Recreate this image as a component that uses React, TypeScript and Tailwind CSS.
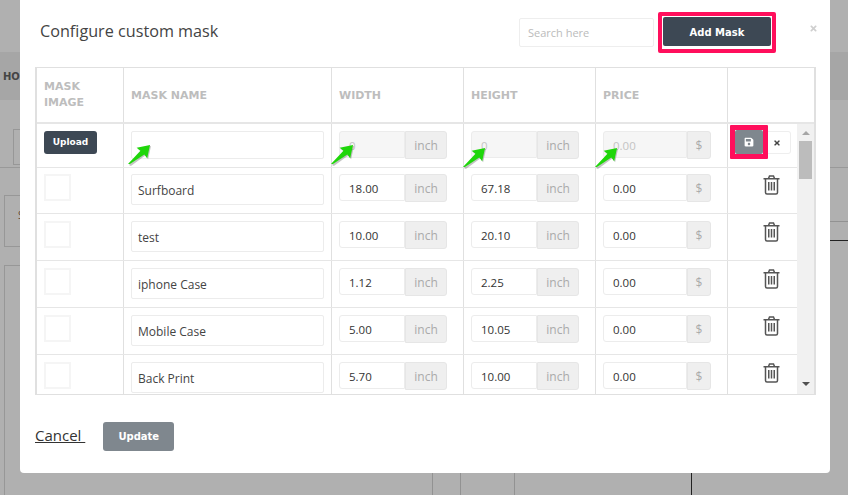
import { FaSave, FaTimes } from "react-icons/fa";

const headFont = { fontFamily: '"DejaVu Sans", sans-serif' };

const rows = [
  { name: "Surfboard", width: "18.00", height: "67.18", price: "0.00", h: "h-[46px]", top: "pt-[6px]" },
  { name: "test", width: "10.00", height: "20.10", price: "0.00", h: "h-[47px]", top: "pt-[7px]" },
  { name: "iphone Case", width: "1.12", height: "2.25", price: "0.00", h: "h-[47px]", top: "pt-[7px]" },
  { name: "Mobile Case", width: "5.00", height: "10.05", price: "0.00", h: "h-[47px]", top: "pt-[7px]" },
  { name: "Back Print", width: "5.70", height: "10.00", price: "0.00", h: "h-[39px]", top: "pt-[7px]" },
];

function Addon({ value, unit, disabled, wide }: { value: string; unit: string; disabled?: boolean; wide?: boolean }) {
  return (
    <div className="flex items-start">
      <div
        className={`flex h-[27px] items-center rounded-l-[3px] border border-[#ececec] pl-[9px] pt-[2px] text-[11.5px] ${
          wide ? "w-[84px]" : "w-[66px]"
        } ${disabled ? "bg-[#f6f6f6] text-[#c4c4c4]" : "bg-white text-[#333]"}`}
      >
        {value}
      </div>
      <div
        className={`flex h-[28px] items-center justify-center rounded-r-[3px] border border-[#e6e6e6] bg-[#efefef] pt-[2px] text-[12px] text-[#aaa] ${
          wide ? "w-[24px]" : "w-[42px]"
        }`}
      >
        {unit}
      </div>
    </div>
  );
}

function Arrow({ className }: { className: string }) {
  return (
    <svg className={`absolute ${className}`} width="25" height="23" viewBox="0 0 26 24">
      <path d="M1 22 L14 8 L10 5 L24 2 L21 16 L18 12 L3 23 Z" fill="#555" opacity="0.35" transform="translate(1 1)" />
      <path d="M1 22 L14 8 L10 5 L24 2 L21 16 L18 12 L3 22 Z" fill="#1fd60a" />
    </svg>
  );
}

function TrashIcon() {
  return (
    <svg width="17" height="20" viewBox="0 0 17 20" fill="none" stroke="#555" strokeWidth="1.5" className="mt-px">
      <path d="M5.5 3.5 L6.5 1 H10.5 L11.5 3.5" />
      <path d="M0.5 3.75 H16.5" />
      <path d="M2.5 4 V17.5 A1.5 1.5 0 0 0 4 19 H13 A1.5 1.5 0 0 0 14.5 17.5 V4" />
      <path d="M5.75 7 V15.5 M8.5 7 V15.5 M11.25 7 V15.5" />
    </svg>
  );
}

export default function App() {
  return (
    <div className="relative h-[495px] w-[848px] overflow-hidden bg-[#b0b0b0]" style={{ fontFamily: '"Open Sans", sans-serif' }}>
      {/* page behind the overlay */}
      <div className="absolute left-0 top-[52px] flex h-[48px] w-full items-center bg-[#a6a6a6] pl-[3px] text-[10px] font-bold text-[#444]" style={headFont}>
        HO
      </div>
      <div className="absolute left-[13px] top-[129px] h-[36px] w-[40px] border border-[#979797]" />
      <div className="absolute left-0 top-[167px] h-px w-full bg-[#999]" />
      <div className="absolute left-[4px] top-[195px] h-[52px] w-[40px] border border-r-0 border-[#979797]" />
      <div className="absolute left-[4px] top-[265px] h-[240px] w-[40px] border border-r-0 border-[#979797]" />
      <div className="absolute left-[18px] top-[208px] text-[10px] text-[#5f4a3a]">S</div>
      <div className="absolute right-0 top-[221px] h-px w-[20px] bg-[#929292]" />
      <div className="absolute right-0 top-[240px] h-px w-[20px] bg-[#222]" />
      <div className="absolute left-[432px] top-[470px] h-[30px] w-px bg-[#929292]" />
      <div className="absolute left-[460px] top-[470px] h-[30px] w-px bg-[#929292]" />
      <div className="absolute left-[514px] top-[470px] h-[30px] w-px bg-[#929292]" />
      <div className="absolute left-[691px] top-[470px] h-[30px] w-px bg-[#222]" />

      {/* modal */}
      <div className="absolute left-[20px] top-0 h-[473px] w-[810px] rounded-b-[4px] bg-white">
        <div className="relative flex h-[67px] items-start pl-[20px]">
          <h1 className="mt-[18px] text-[16.2px] leading-[26px] text-[#444]">Configure custom mask</h1>
          <div className="ml-auto mr-[54px] mt-[12px] flex items-start">
            <div className="mt-[6px] flex h-[29px] w-[135px] items-center rounded-[2px] border border-[#eeeeee] pl-[8px] pt-[2px] text-[11px] text-[#bbb]">
              Search here
            </div>
            <div className="ml-[4px] h-[41px] w-[118px] rounded-[2px] border-[4px] border-[#ff0f5c] p-px">
              <button className="block h-[29px] w-[108px] rounded-[2px] bg-[#3d4854] pt-px text-[10px] font-bold text-white" style={headFont}>
                Add Mask
              </button>
            </div>
          </div>
          <FaTimes className="absolute right-[12px] top-[24px] text-[9px] text-[#cfcfcf]" />
        </div>

        <div className="relative ml-[15px] w-[781px] border border-x-2 border-[#e0e0e0]">
          <div className="flex h-[56px] border-b-2 border-[#e6e6e6] text-[11px] font-bold text-[#bdbdbd]" style={headFont}>
            <div className="flex w-[87px] items-center border-r border-[#e0e0e0] pl-[7px] leading-[16px]">
              MASK
              <br />
              IMAGE
            </div>
            <div className="flex w-[208px] items-center border-r border-[#e0e0e0] pl-[7px] pt-[3px]">MASK NAME</div>
            <div className="flex w-[132px] items-center border-r border-[#e0e0e0] pl-[7px] pt-[3px]">WIDTH</div>
            <div className="flex w-[132px] items-center border-r border-[#e0e0e0] pl-[7px] pt-[3px]">HEIGHT</div>
            <div className="flex w-[132px] items-center border-r border-[#e0e0e0] pl-[7px] pt-[3px]">PRICE</div>
          </div>

          <div className="flex">
            <div className="w-[760px]">
              <div className="flex h-[44px] border-b border-[#e6e6e6]">
                <div className="w-[87px] border-r border-[#e0e0e0] pl-[7px] pt-[7px]">
                  <button className="block h-[23px] w-[53px] rounded-[3px] bg-[#3d4854] text-[9px] font-bold text-white" style={headFont}>
                    Upload
                  </button>
                </div>
                <div className="w-[208px] border-r border-[#e0e0e0] pl-[7px] pt-[7px]">
                  <div className="h-[28px] w-[193px] rounded-[2px] border border-[#ececec]" />
                </div>
                <div className="w-[132px] border-r border-[#e0e0e0] pl-[7px] pt-[7px]">
                  <Addon value="0" unit="inch" disabled />
                </div>
                <div className="w-[132px] border-r border-[#e0e0e0] pl-[7px] pt-[7px]">
                  <Addon value="0" unit="inch" disabled />
                </div>
                <div className="w-[132px] border-r border-[#e0e0e0] pl-[7px] pt-[7px]">
                  <Addon value="0.00" unit="$" disabled wide />
                </div>
                <div className="flex flex-1 items-start pl-[2px] pt-[1px]">
                  <div className="h-[34px] w-[38px] rounded-[1px] border-[5px] border-[#ff0f5c]">
                    <div className="flex h-full items-center justify-center rounded-[2px] bg-[#7f878e] text-white">
                      <FaSave className="text-[10px]" />
                    </div>
                  </div>
                  <div className="mt-[6px] flex h-[23px] w-[23px] items-center justify-center rounded-r-[3px] border border-l-0 border-[#eeeeee] pr-[5px] text-[#444]">
                    <FaTimes className="text-[8px]" />
                  </div>
                </div>
              </div>

              {rows.map((row, i) => (
                <div key={row.name} className={`flex overflow-hidden ${row.h} ${i < rows.length - 1 ? "border-b border-[#e6e6e6]" : ""}`}>
                  <div className={`w-[87px] border-r border-[#e0e0e0] pl-[7px] ${row.top}`}>
                    <div className="h-[27px] w-[27px] border-[2px] border-[#f5f5f5]" />
                  </div>
                  <div className={`w-[208px] border-r border-[#e0e0e0] pl-[7px] ${row.top}`}>
                    <div className="flex h-[31px] w-[193px] items-center rounded-[2px] border border-[#ececec] pl-[6px] pt-[2px] text-[12px] text-[#444]">
                      {row.name}
                    </div>
                  </div>
                  <div className={`w-[132px] border-r border-[#e0e0e0] pl-[7px] ${row.top}`}>
                    <Addon value={row.width} unit="inch" />
                  </div>
                  <div className={`w-[132px] border-r border-[#e0e0e0] pl-[7px] ${row.top}`}>
                    <Addon value={row.height} unit="inch" />
                  </div>
                  <div className={`w-[132px] border-r border-[#e0e0e0] pl-[7px] ${row.top}`}>
                    <Addon value={row.price} unit="$" wide />
                  </div>
                  <div className={`flex flex-1 justify-center pl-[17px] ${row.top}`}>
                    <TrashIcon />
                  </div>
                </div>
              ))}
            </div>

            {/* scrollbar */}
            <div className="flex w-[17px] flex-col items-center bg-[#f1f1f1] pt-[7px]">
              <div className="h-0 w-0 border-x-[4px] border-b-[4px] border-x-transparent border-b-[#a5a5a5]" />
              <div className="mt-[6px] h-[38px] w-[13px] bg-[#bcbcbc]" />
              <div className="mt-auto mb-[8px] h-0 w-0 border-x-[4px] border-t-[4px] border-x-transparent border-t-[#505050]" />
            </div>
          </div>

          <Arrow className="left-[90px] top-[75px]" />
          <Arrow className="left-[293px] top-[75px]" />
          <Arrow className="left-[425px] top-[78px]" />
          <Arrow className="left-[557px] top-[78px]" />
        </div>

        <div className="mt-[27px] flex items-center pl-[15px]">
          <a className="mb-[3px] text-[15px] text-[#333] underline">Cancel&nbsp;</a>
          <button className="ml-[18px] h-[29px] w-[71px] rounded-[3px] bg-[#7f878e] text-[10px] font-bold text-white" style={headFont}>
            Update
          </button>
        </div>
      </div>
    </div>
  );
}
